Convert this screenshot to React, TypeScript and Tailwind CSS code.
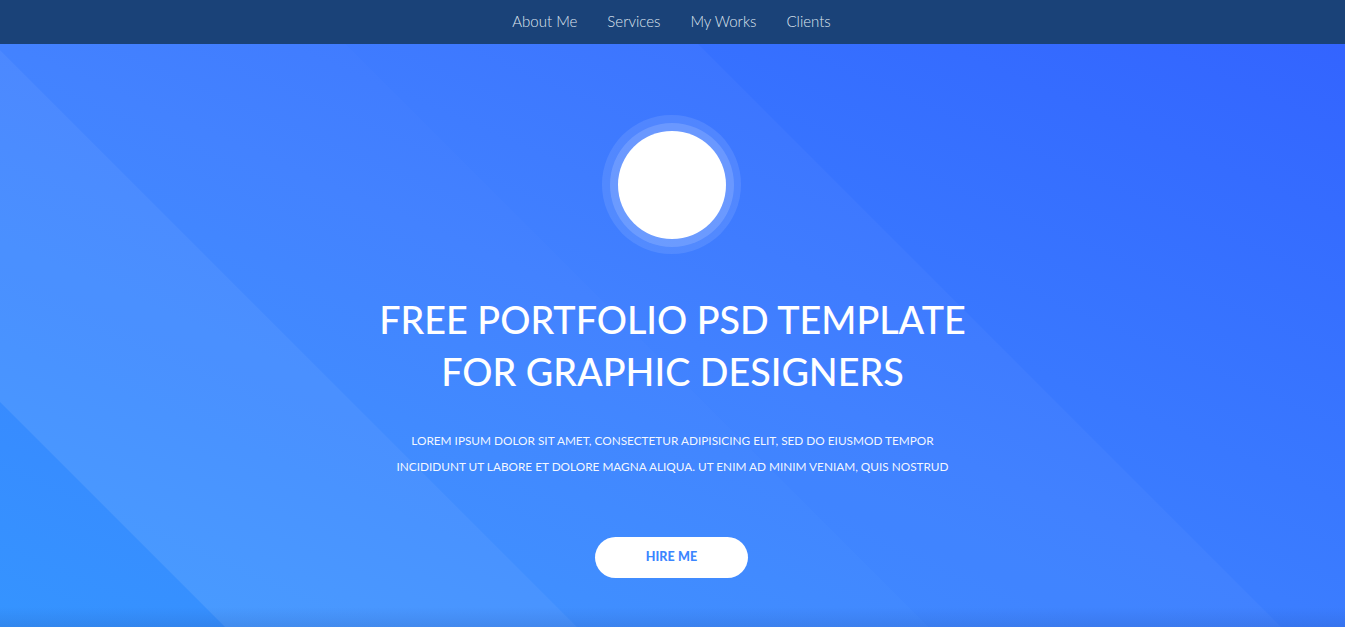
import React from 'react';

const navLinks = ['About Me', 'Services', 'My Works', 'Clients'];

export default function App() {
  return (
    <div className="min-h-screen font-[Lato,'Open_Sans',sans-serif]">
      {/* Top navigation */}
      <nav className="h-11 bg-[#1a4278] flex items-center justify-center gap-[30px] pb-[2px] pr-[2px]">
        {navLinks.map((link) => (
          <a key={link} href="#" className="text-[15px] font-light text-[#dfe5ef] leading-none">
            {link}
          </a>
        ))}
      </nav>

      {/* Hero */}
      <section className="relative h-[583px] overflow-hidden bg-linear-to-tr from-[#3594ff] via-[#3b7dff] to-[#3364ff]">
        <svg
          className="absolute inset-0 w-full h-full pointer-events-none"
          viewBox="0 0 1345 583"
          preserveAspectRatio="none"
        >
          <polygon points="0,6 577,583 225,583 0,358" fill="#ffffff" fillOpacity="0.09" />
          <polygon points="0,0 346,0 929,583 577,583 0,6" fill="#ffffff" fillOpacity="0.045" />
          <polygon points="346,0 698,0 1281,583 929,583" fill="#ffffff" fillOpacity="0.03" />
        </svg>
        <div className="absolute inset-x-0 bottom-0 h-5 bg-linear-to-b from-transparent to-[#1a3a8a]/15" />

        <div className="relative flex flex-col items-center pt-[71px] text-white">
          {/* Avatar rings */}
          <div className="w-[139px] h-[139px] rounded-full bg-white/10 flex items-center justify-center -translate-x-[1px]">
            <div className="w-[124px] h-[124px] rounded-full bg-white/15 flex items-center justify-center">
              <div className="w-[108px] h-[108px] rounded-full bg-white" />
            </div>
          </div>

          <h1 className="mt-10 text-[37.7px] leading-[52px] font-medium text-center">
            FREE PORTFOLIO PSD TEMPLATE
            <br />
            FOR GRAPHIC DESIGNERS
          </h1>

          <p className="mt-[30px] text-[11.8px] leading-[26px] text-center text-white/95">
            LOREM IPSUM DOLOR SIT AMET, CONSECTETUR ADIPISICING ELIT, SED DO EIUSMOD TEMPOR
            <br />
            INCIDIDUNT UT LABORE ET DOLORE MAGNA ALIQUA. UT ENIM AD MINIM VENIAM, QUIS NOSTRUD
          </p>

          <button className="mt-[57px] w-[153px] h-[41px] rounded-full bg-white text-[#3b86ff] text-[12.5px] font-black tracking-[0.01em] -translate-x-[1px]">
            HIRE ME
          </button>
        </div>
      </section>
    </div>
  );
}
